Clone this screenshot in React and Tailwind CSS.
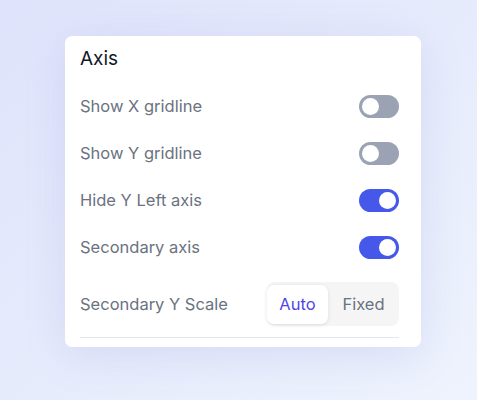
import React from "react";

function Toggle({ on }) {
  return (
    <div
      className={`w-[40px] h-[23px] rounded-full p-[3px] flex items-center ${
        on ? "bg-[#4658e9] justify-end" : "bg-[#9ba2b3] justify-start"
      }`}
    >
      <div className="w-[17px] h-[17px] rounded-full bg-white" />
    </div>
  );
}

function Row({ label, on }) {
  return (
    <div className="h-[47px] flex items-center justify-between">
      <span className="text-[16.5px] text-[#6b7280]">{label}</span>
      <Toggle on={on} />
    </div>
  );
}

export default function App() {
  return (
    <div
      className="w-[477px] h-[400px] bg-gradient-to-br from-[#dfe3fb] to-[#eef3fd] pt-[36px] pl-[65px]"
      style={{ fontFamily: "Inter, 'Noto Sans', sans-serif" }}
    >
      <div className="w-[356px] h-[311px] bg-white rounded-[7px] shadow-[0_8px_40px_rgba(120,135,210,0.18)] pl-[15px] pr-[22px] pt-[11px] flex flex-col">
        <div className="h-[36px] text-[19px] leading-[24px] text-[#111827]">
          Axis
        </div>
        <Row label="Show X gridline" on={false} />
        <Row label="Show Y gridline" on={false} />
        <Row label="Hide Y Left axis" on={true} />
        <Row label="Secondary axis" on={true} />
        <div className="mt-[11px] h-[44px] flex items-center justify-between">
          <span className="text-[16.5px] text-[#6b7280]">Secondary Y Scale</span>
          <div className="w-[132px] h-[44px] rounded-[8px] bg-[#f5f5f6] flex items-center">
            <div className="w-[61px] h-[39px] rounded-[7px] bg-white shadow-[0_1px_4px_rgba(0,0,0,0.10)] flex items-center justify-center text-[16.5px] text-[#5046e5]">
              Auto
            </div>
            <div className="flex-1 flex items-center justify-center text-[16.5px] text-[#6b7280]">
              Fixed
            </div>
          </div>
        </div>
        <div className="mt-[11px] h-px bg-[#e5e7eb] w-full" />
      </div>
    </div>
  );
}
